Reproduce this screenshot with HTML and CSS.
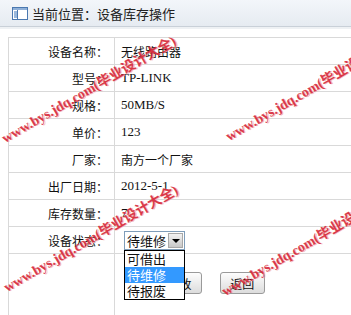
FILE: index.html
```html
<!DOCTYPE html>
<html lang="zh-CN">
<head>
    <meta charset="UTF-8">
    <title>设备库存操作</title>
    <link rel="stylesheet" href="styles.css">
</head>
<body>
    <div class="topbar">
        <svg class="topbar-icon" width="16" height="13" viewBox="0 0 16 13">
            <rect x="0.5" y="0.5" width="15" height="12" fill="#fff" stroke="#4a78b0"/>
            <rect x="1" y="1" width="14" height="2" fill="#8fb0d8"/>
            <rect x="2" y="4" width="3" height="7" fill="#9ab8dc"/>
            <line x1="5.5" y1="3" x2="5.5" y2="12" stroke="#4a78b0"/>
        </svg>
        <span>当前位置：设备库存操作</span>
    </div>

    <table class="form-table">
        <colgroup>
            <col class="col-label">
            <col>
        </colgroup>
        <tr><td class="label">设备名称：</td><td class="value">无线路由器</td></tr>
        <tr><td class="label">型号：</td><td class="value latin">TP-LINK</td></tr>
        <tr><td class="label">规格：</td><td class="value latin">50MB/S</td></tr>
        <tr><td class="label">单价：</td><td class="value latin">123</td></tr>
        <tr><td class="label">厂家：</td><td class="value">南方一个厂家</td></tr>
        <tr><td class="label">出厂日期：</td><td class="value latin">2012-5-1</td></tr>
        <tr><td class="label">库存数量：</td><td class="value latin">7</td></tr>
        <tr>
            <td class="label">设备状态：</td>
            <td class="value">
                <div class="fake-select">
                    <span class="select-text">待维修</span>
                    <span class="select-arrow"></span>
                    <ul class="select-options">
                        <li>可借出</li>
                        <li class="active">待维修</li>
                        <li>待报废</li>
                    </ul>
                </div>
            </td>
        </tr>
        <tr class="btn-row">
            <td></td>
            <td class="value">
                <button class="btn">修改</button>
                <button class="btn">返回</button>
            </td>
        </tr>
    </table>

    <!-- 水印 -->
    <div class="wm wm1">www.bys.jdq.com(毕业设计大全)</div>
    <div class="wm wm2">www.bys.jdq.com(毕业设计大全)</div>
    <div class="wm wm3">www.bys.jdq.com(毕业设计大全)</div>
    <div class="wm wm4">www.bys.jdq.com(毕业设计大全)</div>
</body>
</html>
```

FILE: styles.css
```css
body {
    margin: 0;
    font-family: "Noto Sans CJK SC", sans-serif;
    font-size: 12px;
    color: #111;
    background-color: #fff;
    overflow: hidden;
    position: relative;
    height: 315px;
}

.topbar {
    height: 26px;
    display: flex;
    align-items: center;
    padding-left: 12px;
    background: linear-gradient(#f3f6fa, #e6ebf1);
    border-bottom: 1px solid #c9d0d8;
    box-shadow: 0 2px 0 #eef1f4;
    font-size: 13px;
    color: #222;
}

.topbar-icon {
    margin-right: 4px;
}

.form-table {
    margin: 10px 0 0 8px;
    width: 360px;
    table-layout: fixed;
    border-collapse: collapse;
}

.col-label {
    width: 106px;
}

.form-table td {
    border: 1px solid #d9d9d9;
    height: 26px;
    padding: 0;
}

.label {
    text-align: right;
    padding-right: 6px !important;
}

.value {
    padding-left: 6px !important;
}

.latin {
    font-family: "Liberation Serif", serif;
    font-size: 13px;
}

/* 下拉框 */
.fake-select {
    position: relative;
    width: 59px;
    height: 17px;
    margin-left: 3px;
    border: 1px solid #7f9db9;
    display: flex;
    align-items: center;
    background: #fff;
}

.select-text {
    flex: 1;
    padding-left: 2px;
    font-size: 13px;
}

.select-arrow {
    width: 15px;
    height: 15px;
    margin-right: 1px;
    background: linear-gradient(#f2f2f2, #c8c8c8);
    border: 1px solid #a8a8a8;
    box-sizing: border-box;
    position: relative;
}

.select-arrow::after {
    content: "";
    position: absolute;
    left: 3px;
    top: 5px;
    border-left: 4px solid transparent;
    border-right: 4px solid transparent;
    border-top: 4px solid #000;
}

.select-options {
    position: absolute;
    left: -1px;
    top: 18px;
    width: 59px;
    margin: 0;
    padding: 0;
    list-style: none;
    background: #fff;
    border: 1px solid #000;
    z-index: 2;
}

.select-options li {
    height: 16px;
    line-height: 16px;
    padding-left: 2px;
    font-size: 13px;
}

.select-options li.active {
    background-color: #3399ff;
    color: #fff;
}

.btn-row td {
    height: 70px;
    vertical-align: top;
    padding-top: 18px;
}

.btn {
    width: 45px;
    height: 22px;
    padding: 0;
    font-family: "Noto Sans CJK SC", sans-serif;
    font-size: 12px;
    color: #111;
    border: 1px solid #9a9a9a;
    border-radius: 3px;
    background: linear-gradient(#fdfdfd, #dcdcdc);
}

.btn + .btn {
    margin-left: 15px;
}

.btn-row .value {
    padding-left: 42px !important;
}

/* 水印 */
.wm {
    position: absolute;
    white-space: nowrap;
    font-family: "Liberation Serif", "Noto Sans CJK SC", serif;
    font-weight: bold;
    font-size: 14px;
    color: rgba(214, 36, 54, 0.88);
    text-shadow: 1px 1px 0 rgba(240, 160, 160, 0.7);
    transform-origin: left center;
    transform: rotate(-30deg);
    z-index: 5;
}

.wm1 { left: 2px; top: 128px; }
.wm2 { left: 226px; top: 126px; }
.wm3 { left: 4px; top: 277px; }
.wm4 { left: 222px; top: 281px; }
```
